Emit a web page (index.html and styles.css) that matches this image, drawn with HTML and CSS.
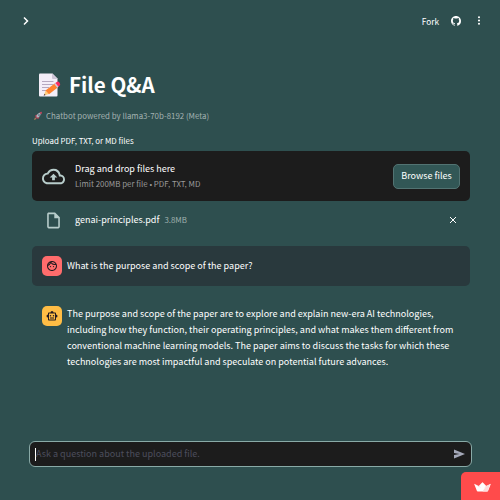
FILE: index.html
```html
<!DOCTYPE html>
<html lang="en">
<head>
<meta charset="utf-8">
<title>File Q&amp;A</title>
<link rel="stylesheet" href="styles.css">
</head>
<body>
<div class="app">
  <header class="toolbar">
    <svg class="chevron" viewBox="0 0 24 24"><path d="M8 5l7 7-7 7"/></svg>
    <div class="actions">
      <span class="fork">Fork</span>
      <svg class="github" viewBox="0 0 16 16"><path d="M8 0C3.58 0 0 3.58 0 8c0 3.54 2.29 6.53 5.47 7.59.4.07.55-.17.55-.38 0-.19-.01-.82-.01-1.49-2.01.37-2.53-.49-2.69-.94-.09-.23-.48-.94-.82-1.13-.28-.15-.68-.52-.01-.53.63-.01 1.08.58 1.23.82.72 1.21 1.87.87 2.33.66.07-.52.28-.87.51-1.07-1.78-.2-3.64-.89-3.64-3.95 0-.87.31-1.59.82-2.15-.08-.2-.36-1.02.08-2.12 0 0 .67-.21 2.2.82a7.6 7.6 0 0 1 4 0c1.53-1.04 2.2-.82 2.2-.82.44 1.1.16 1.92.08 2.12.51.56.82 1.27.82 2.15 0 3.07-1.87 3.75-3.65 3.95.29.25.54.73.54 1.48 0 1.07-.01 1.93-.01 2.2 0 .21.15.46.55.38A8.01 8.01 0 0 0 16 8c0-4.42-3.58-8-8-8z"/></svg>
      <svg class="dots" viewBox="0 0 4 10"><circle cx="2" cy="1.3" r="1.15"/><circle cx="2" cy="5" r="1.15"/><circle cx="2" cy="8.7" r="1.15"/></svg>
    </div>
  </header>

  <main class="content">
    <h1 class="title">
      <svg class="memo" viewBox="0 0 22 24">
        <path fill="#f3eef8" d="M1 .5h12.5l5 5v17q0 1-1 1H1q-1 0-1-1v-21q0-1 1-1z"/>
        <path fill="#cdc4d6" d="M13 .5l5.500 5.500h-4.500q-1 0-1-1z"/>
        <path stroke="#b6a8c0" stroke-width="1" d="M3 8.500h11.500M3 11.500h11.500M3 14.500h7M3 17.500h5"/>
        <path fill="#ffce7c" d="M5 22.500l1.500-5 3.500 3.600z"/>
        <path fill="#ff822d" d="M6.500 17.500l9.500-7.300 3 4-9 7z"/>
        <path fill="#d3c6df" d="M15.200 10.800l1.500-1.100 3 3.900-1.500 1.200z"/>
        <path fill="#fb2b61" d="M16.400 9.900l1.300-1q1.500-.9 2.700.5 1.600 1.900.3 3.200l-1.300 1z"/>
        <path fill="#4a3540" d="M4.700 22.800l.6-2 1.300 1.300z"/>
      </svg>
      <span>File Q&amp;A</span>
    </h1>
    <p class="caption">
      <svg class="rocket" viewBox="0 0 20 20">
        <path fill="#a83e52" d="M4 9l4-2 2 2-5 3zM11 16l2-4-2-2-3 5z"/>
        <path fill="#aeb6bf" d="M6 11q3-7 9-8 2 6-6 11z"/>
        <path fill="#b7465d" d="M13 3q3-2 5-1 0 3-2 5z"/>
        <path fill="#b7465d" d="M6 10l4 4-3 1-2-2z"/>
        <circle fill="#4b6475" cx="12" cy="8" r="1.700"/>
        <path fill="#b78459" d="M2 18l2-5 3 3z"/>
      </svg>
      <span>Chatbot powered by llama3-70b-8192 (Meta)</span>
    </p>

    <p class="label">Upload PDF, TXT, or MD files</p>
    <section class="dropzone">
      <svg class="cloud" viewBox="0 0 24 24"><path d="M19.350 10.040A7.490 7.490 0 0 0 12 4C9.110 4 6.600 5.640 5.350 8.040A5.994 5.994 0 0 0 0 14c0 3.310 2.690 6 6 6h13c2.760 0 5-2.240 5-5 0-2.640-2.050-4.780-4.650-4.960zM19 18H6c-2.210 0-4-1.790-4-4 0-2.050 1.530-3.760 3.560-3.970l1.070-.11.5-.95A5.469 5.469 0 0 1 12 6c2.620 0 4.880 1.860 5.390 4.430l.3 1.500 1.530.11A2.980 2.980 0 0 1 22 15c0 1.650-1.350 3-3 3zM8 13h2.550v3h2.900v-3H16l-4-4z"/></svg>
      <div class="drop-text">
        <div class="drop-title">Drag and drop files here</div>
        <div class="drop-limit">Limit 200MB per file • PDF, TXT, MD</div>
      </div>
      <button class="browse">Browse files</button>
    </section>

    <div class="file">
      <svg class="file-icon" viewBox="0 0 24 24"><path d="M14 2H6c-1.100 0-2 .9-2 2v16c0 1.100.9 2 2 2h12c1.100 0 2-.9 2-2V8l-6-6zM6 20V4h7v5h5v11z"/></svg>
      <span class="file-name">genai-principles.pdf</span>
      <span class="file-size">3.8MB</span>
      <svg class="close" viewBox="0 0 8 8"><path d="M1 1l6 6M7 1L1 7"/></svg>
    </div>

    <article class="message user">
      <span class="avatar red"><svg viewBox="0 0 24 24"><path d="M10.250 13a1.250 1.250 0 1 1-2.500 0 1.250 1.250 0 0 1 2.500 0zM15 11.750a1.250 1.250 0 1 0 0 2.500 1.250 1.250 0 0 0 0-2.500zM22 12c0 5.520-4.480 10-10 10S2 17.520 2 12 6.480 2 12 2s10 4.480 10 10zM10.660 4.120C12.060 6.440 14.600 8 17.500 8c.46 0 .91-.05 1.340-.12C17.440 5.560 14.900 4 12 4c-.46 0-.91.05-1.340.12zM4.420 9.470c1.710-.97 3.030-2.550 3.660-4.440a8.040 8.040 0 0 0-3.660 4.440zM20 12c0-.78-.12-1.530-.33-2.240-.7.150-1.420.24-2.170.24a9.950 9.950 0 0 1-7.760-3.690A10.020 10.020 0 0 1 4 11.860V12c0 4.410 3.590 8 8 8s8-3.590 8-8z"/></svg></span>
      <p>What is the purpose and scope of the paper?</p>
    </article>

    <article class="message">
      <span class="avatar amber"><svg viewBox="0 0 24 24"><path d="M20 9V7c0-1.100-.9-2-2-2h-3a3 3 0 0 0-6 0H6c-1.100 0-2 .9-2 2v2a3 3 0 0 0 0 6v4c0 1.100.9 2 2 2h12c1.100 0 2-.9 2-2v-4a3 3 0 0 0 0-6zm-2 10H6V7h12v12zm-9-6a1.500 1.500 0 1 1 0-3 1.500 1.500 0 0 1 0 3zm7.500-1.500a1.500 1.500 0 1 1-3 0 1.500 1.500 0 0 1 3 0zM8 15h8v2H8z"/></svg></span>
      <p class="answer">The purpose and scope of the paper are to explore and explain new-era AI technologies,<br>including how they function, their operating principles, and what makes them different from<br>conventional machine learning models. The paper aims to discuss the tasks for which these<br>technologies are most impactful and speculate on potential future advances.</p>
    </article>
  </main>

  <div class="prompt">
    <span class="caret"></span>
    <span class="placeholder">Ask a question about the uploaded file.</span>
    <svg class="send" viewBox="0 0 12 10"><path d="M0 0l12 5-12 5V6l6-1-6-1z"/></svg>
  </div>

  <div class="badge">
    <svg viewBox="0 0 18 10"><path fill="#fff" d="M.3 2.100q-.2-.7.500-.4L5 4l3.600-3.800q.4-.4.800 0L13 4l4.200-2.300q.7-.3.500.4L15 9q-.2.700-1 .7H4q-.8 0-1-.7z"/><path fill="#ffb6b9" d="M5 4l2.500 2L1.500 2.300zM13 4l-2.500 2 6-3.700z"/><path fill="#ffdadb" d="M13 4l4-2-2.300 7q-.2.700-.7.700H9z"/></svg>
  </div>
</div>
</body>
</html>
```
FILE: styles.css
```css
* { box-sizing: border-box; }
body {
  margin: 0;
  background: #2e4f4f;
  color: #fff;
  font: 400 9.04px/16px "Noto Sans CJK JP", "Noto Sans", sans-serif;
}
p, h1 { margin: 0; }
svg { display: block; flex: none; }
.app {
  position: relative;
  width: 500px;
  height: 500px;
  overflow: hidden;
  display: flex;
  flex-direction: column;
  white-space: nowrap;
}
.toolbar {
  height: 41px;
  flex: none;
  display: flex;
  align-items: center;
  justify-content: space-between;
  padding: 0 19px 0 20px;
}
.chevron { width: 12px; height: 12px; fill: none; stroke: #fff; stroke-width: 3; }
.actions { display: flex; align-items: center; }
.fork { font-size: 8.3px; margin-right: 12px; }
.github { width: 10px; height: 10px; fill: #fff; margin-right: 16px; }
.dots { width: 4px; height: 9px; fill: #fff; }
.content { padding: 28px 30px 0 32px; }
.title {
  height: 31px;
  display: flex;
  align-items: center;
  gap: 8px;
  padding-left: 7px;
  font-size: 20.6px;
  line-height: 31px;
  font-weight: 700;
}
.memo { width: 22px; height: 24px; }
.caption {
  height: 16px;
  margin-top: 8px;
  display: flex;
  align-items: center;
  gap: 3px;
  color: #a3b2b1;
  font-size: 7.9px;
  padding-left: 1px;
}
.rocket { width: 10px; height: 10px; }
.label { height: 16px; margin-top: 9px; font-size: 7.9px; }
.dropzone {
  height: 50px;
  margin-top: 2px;
  padding: 0 10px;
  border-radius: 5px;
  background: #1c1c1c;
  display: flex;
  align-items: center;
}
.cloud { width: 23px; height: 23px; fill: #b8cdcb; margin-right: 10px; }
.drop-text { flex: 1; line-height: 15px; }
.drop-limit { font-size: 7.9px; color: #9a9a9a; }
.browse {
  width: 67px;
  height: 25px;
  padding: 0 0 1px;
  border: 1px solid #527372;
  border-radius: 5px;
  background: #325756;
  color: #fff;
  font: inherit;
}
.file { height: 38px; display: flex; align-items: center; padding: 0 13px 0 12px; }
.file-icon { width: 19px; height: 19px; fill: #b8cdcb; margin-right: 12px; }
.file-size { font-size: 7.9px; color: #9fafae; margin-left: 5px; flex: 1; }
.close { width: 8px; height: 8px; fill: none; stroke: #fff; stroke-width: 1; }
.message { display: flex; align-items: flex-start; gap: 5px; padding: 10px; }
.message p { padding-top: 2px; }
.message .answer { padding-top: 0; }
.user { height: 40px; margin: 7px 0 10px; border-radius: 5px; background: #29393d; }
.avatar {
  width: 20px;
  height: 20px;
  flex: none;
  border-radius: 5px;
  display: grid;
  place-items: center;
}
.avatar svg { width: 12px; height: 12px; fill: #251b20; }
.red { background: #ff6c6c; }
.amber { background: #ffbd45; }
.prompt {
  width: 443px;
  height: 26px;
  margin: auto 0 33px 29px;
  padding: 0 6px 0 5px;
  border: 1px solid #89aaa7;
  border-radius: 6px;
  background: #1c1c1c;
  display: flex;
  align-items: center;
}
.caret { width: 1px; height: 13px; background: #fff; }
.placeholder { flex: 1; color: #4c4e5d; }
.send { width: 11px; height: 10px; fill: #a4a8b8; }
.badge {
  position: absolute;
  right: 0;
  bottom: 0;
  width: 39px;
  height: 28px;
  border-top-left-radius: 5px;
  background: #ff4b4b;
  display: flex;
  align-items: center;
  justify-content: center;
}
.badge svg { width: 17px; height: 10px; margin: 2px 0 0 3px; }
```
